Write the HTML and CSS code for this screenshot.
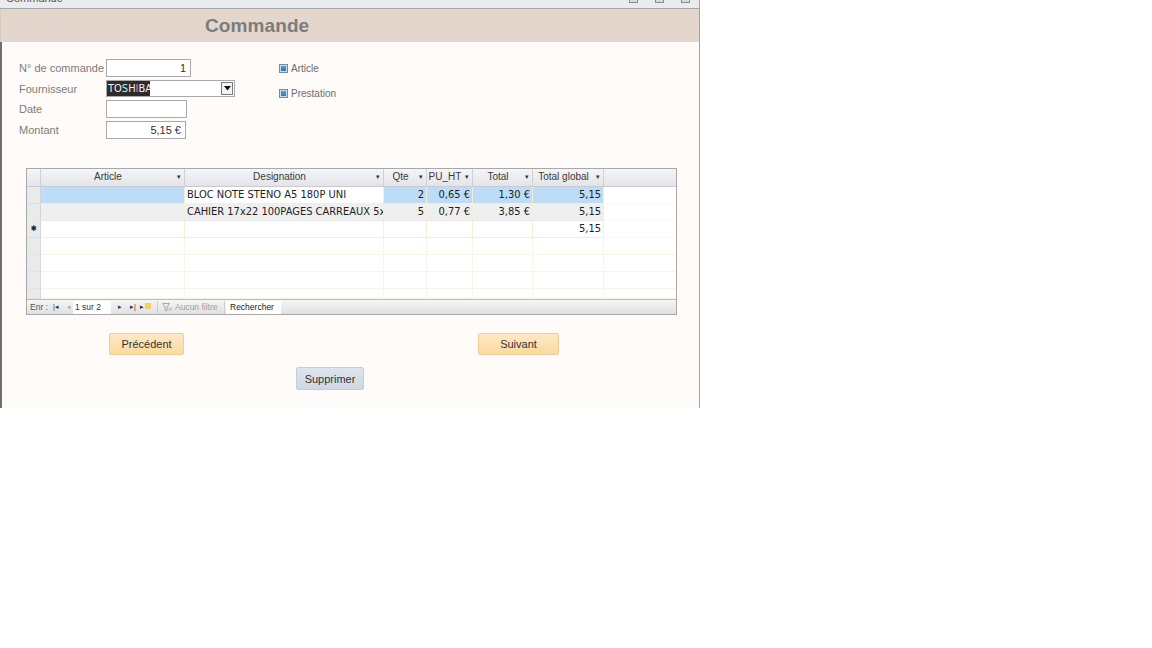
FILE: index.html
```html
<!DOCTYPE html>
<html lang="fr">
<head>
<meta charset="utf-8">
<title>Commande</title>
<link rel="stylesheet" href="styles.css">
</head>
<body>
<div class="window">
  <div class="titlebar">
    <span class="tb-text">Commande</span>
    <span class="tb-btns"><i></i><i></i><i></i></span>
  </div>
  <div class="header"><h1 class="title">Commande</h1></div>
  <div class="content">
    <div class="top">
      <div class="fields">
        <label class="lbl">N° de commande</label>
        <div class="input w84 num">1</div>
        <label class="lbl">Fournisseur</label>
        <div class="combo"><span class="sel">TO<span class="c1">S</span>H<span class="c2">I</span>BA</span><span class="drop"><svg width="7" height="5" viewBox="0 0 7 5"><path d="M0 0h7L3.5 4.5z" fill="#111"/></svg></span></div>
        <label class="lbl">Date</label>
        <div class="input w81"></div>
        <label class="lbl">Montant</label>
        <div class="input w80 num">5,15 €</div>
      </div>
      <div class="checks">
        <div class="chk"><span class="box"></span>Article</div>
        <div class="chk"><span class="box"></span>Prestation</div>
      </div>
    </div>

    <div class="sheet">
      <div class="grid head">
        <div class="c sel-col"></div>
        <div class="c h">Article<span class="arr">▾</span></div>
        <div class="c h">Designation<span class="arr">▾</span></div>
        <div class="c h">Qte<span class="arr">▾</span></div>
        <div class="c h">PU_HT<span class="arr">▾</span></div>
        <div class="c h">Total<span class="arr">▾</span></div>
        <div class="c h">Total global<span class="arr">▾</span></div>
        <div class="c hx"></div>
      </div>
      <div class="grid row r1">
        <div class="c sel-col"></div>
        <div class="c blue"></div>
        <div class="c wh">BLOC NOTE STENO A5 180P UNI</div>
        <div class="c blue r">2</div>
        <div class="c blue r">0,65 €</div>
        <div class="c blue r">1,30 €</div>
        <div class="c blue r">5,15</div>
        <div class="c ex"></div>
      </div>
      <div class="grid row r2">
        <div class="c sel-col"></div>
        <div class="c"></div>
        <div class="c">CAHIER 17x22 100PAGES CARREAUX 5x</div>
        <div class="c r">5</div>
        <div class="c r">0,77 €</div>
        <div class="c r">3,85 €</div>
        <div class="c r">5,15</div>
        <div class="c ex"></div>
      </div>
      <div class="grid row r3">
        <div class="c sel-col star">✱</div>
        <div class="c"></div>
        <div class="c"></div>
        <div class="c"></div>
        <div class="c"></div>
        <div class="c"></div>
        <div class="c r">5,15</div>
        <div class="c ex"></div>
      </div>
      <div class="grid row empty"><div class="c sel-col"></div><div class="c"></div><div class="c"></div><div class="c"></div><div class="c"></div><div class="c"></div><div class="c"></div><div class="c ex"></div></div>
      <div class="grid row empty"><div class="c sel-col"></div><div class="c"></div><div class="c"></div><div class="c"></div><div class="c"></div><div class="c"></div><div class="c"></div><div class="c ex"></div></div>
      <div class="grid row empty"><div class="c sel-col"></div><div class="c"></div><div class="c"></div><div class="c"></div><div class="c"></div><div class="c"></div><div class="c"></div><div class="c ex"></div></div>
      <div class="grid row empty last"><div class="c sel-col"></div><div class="c"></div><div class="c"></div><div class="c"></div><div class="c"></div><div class="c"></div><div class="c"></div><div class="c ex"></div></div>
      <div class="nav">
        <span class="nt">Enr :</span>
        <span class="ni n1">|◂</span>
        <span class="ni n2">◂</span>
        <span class="pos">1 sur 2</span>
        <span class="ni n3">▸</span>
        <span class="ni n4">▸|</span>
        <span class="ni n5">▸<span class="newstar"></span></span>
        <span class="filt"><svg width="11" height="9" viewBox="0 0 11 9"><path d="M0.5 0.5h7L5 4v4L3 7V4z" fill="none" stroke="#a0a0a0" stroke-width="0.9"/><path d="M6.5 4.5l3.5 3.5M10 4.5L6.5 8" stroke="#b0b0b0" stroke-width="0.9"/></svg>Aucun filtre</span>
        <span class="search">Rechercher</span>
      </div>
    </div>

    <div class="btnrow">
      <button class="btn orange prev">Précédent</button>
      <button class="btn orange next">Suivant</button>
    </div>
    <div class="btnrow2">
      <button class="btn grey">Supprimer</button>
    </div>
  </div>
</div>
</body>
</html>
```
FILE: styles.css
```css
* { box-sizing: border-box; }
html, body { margin: 0; padding: 0; background: #ffffff; }
body { font-family: "Liberation Sans", Arial, sans-serif; }

.window {
  width: 700px;
  height: 408px;
  display: flex;
  flex-direction: column;
  border-right: 1px solid #a3a3a3;
}

.titlebar {
  height: 9px;
  background: #eaebee;
  border-bottom: 1px solid #a5a6a8;
  display: flex;
  justify-content: space-between;
  overflow: hidden;
}
.tb-text {
  font-size: 11px;
  line-height: 11px;
  margin-top: -7px;
  margin-left: 6px;
  color: #555;
}
.tb-btns { display: flex; gap: 17px; margin-right: 9px; margin-top: -6px; }
.tb-btns i {
  display: block;
  width: 9px;
  height: 9px;
  border: 1px solid #8c8c8c;
  background: #d9dadd;
}

.header {
  height: 33px;
  background: #e3d6cd;
  border-left: 1px solid #d8cbc3;
  display: flex;
  align-items: center;
}
.title {
  margin: 0 0 0 204px;
  font-size: 19px;
  font-weight: bold;
  color: #7c7c7c;
  line-height: 22px;
  letter-spacing: 0.1px;
}

.content {
  flex: 1;
  background: #fffbf8;
  border-left: 2px solid #6f6f6f;
  padding: 17px 0 0 0;
}

.top { display: flex; }
.fields {
  display: grid;
  grid-template-columns: 87px auto;
  grid-template-rows: 18px 17px 18px 18px;
  row-gap: 3px;
  padding-left: 17px;
  width: 277px;
  align-items: center;
  justify-items: start;
}
.lbl {
  font-size: 11px;
  color: #7b7b7b;
  white-space: nowrap;
}
.input {
  height: 18px;
  background: #fff;
  border: 1px solid #a9a9a9;
  font-size: 11px;
  color: #333;
  line-height: 16px;
  padding: 0 4px;
}
.num { text-align: right; }
.w84 { width: 85px; }
.w81 { width: 81px; }
.w80 { width: 80px; }

.combo {
  width: 129px;
  height: 17px;
  background: #fff;
  border: 1px solid #a9a9a9;
  display: flex;
  justify-content: space-between;
  align-items: stretch;
}
.sel {
  background: #2c2c2c;
  color: #f2f2f2;
  font-family: "Liberation Sans Narrow", "DejaVu Sans Condensed", sans-serif;
  font-size: 11px;
  line-height: 15px;
  padding: 0 1px;
  width: 43px;
}
.c1 { color: #b6f0ff; }
.c2 { color: #ff7ad8; }
.drop {
  width: 12px;
  margin: 1px;
  border: 1px solid #7a7a7a;
  background: #f4f4f4;
  display: flex;
  align-items: center;
  justify-content: center;
}

.checks {
  display: flex;
  flex-direction: column;
  gap: 12px;
  padding-top: 3px;
}
.chk {
  display: flex;
  align-items: center;
  gap: 3px;
  font-size: 10px;
  color: #6c6c6c;
  height: 13px;
}
.box {
  width: 9px;
  height: 9px;
  border: 1px solid #7b8a99;
  background: linear-gradient(#5aa5dc, #2c6fae);
  box-shadow: inset 0 0 0 1px #c8dcec;
}

.sheet {
  margin: 29px 0 0 24px;
  width: 651px;
  height: 147px;
  border: 1px solid #a8a8a8;
  background: #fff;
  display: flex;
  flex-direction: column;
}
.grid {
  display: grid;
  grid-template-columns: 14px 144px 199px 43px 46px 60px 71px 1fr;
  height: 17px;
  font-family: "Liberation Sans Narrow", "DejaVu Sans Condensed", sans-serif;
  font-size: 11px;
}
.head {
  background: linear-gradient(#f4f5f7, #e2e4e8);
  border-bottom: 1px solid #c9cbd0;
  height: 18px;
}
.c {
  border-right: 1px solid #f3efd9;
  border-bottom: 1px solid #f3efd9;
  line-height: 16px;
  padding: 0 2px;
  white-space: nowrap;
  overflow: hidden;
  color: #1e1e1e;
}
.head .c { border-right: 1px solid #cfd1d5; border-bottom: none; }
.h {
  position: relative;
  text-align: center;
  color: #3a3a3a;
  font-family: "Liberation Sans", Arial, sans-serif;
  font-size: 10px;
  padding: 0 10px 0 1px;
}
.arr {
  position: absolute;
  right: 3px;
  top: 0;
  font-size: 7px;
  color: #333;
}
.head .hx { border-right: none; }
.sel-col {
  background: #e9eaec;
  border-right: 1px solid #d3d3d3;
  border-bottom: 1px solid #dcdcdc;
  padding: 0;
}
.head .sel-col { background: transparent; }
.r { text-align: right; }
.blue { background: #bcdcf7; }
.wh { background: #fff; }
.r2 .c { background: #efeff0; border-bottom-color: #e9e9e9; }
.r2 .sel-col { background: #e9eaec; }
.row .ex { background: #fff; border-right: none; border-bottom-color: #fbfaf3; }
.star {
  font-size: 8px;
  text-align: center;
  line-height: 16px;
  color: #222;
}
.empty .c { border-color: #f8f5e6; }
.empty .sel-col { border-right-color: #d9d9d9; border-bottom-color: #e3e3e3; }
.last { flex: 1; }

.nav {
  height: 15px;
  background: linear-gradient(#f6f6f7, #dfe0e3);
  border-top: 1px solid #b9bbbf;
  display: flex;
  align-items: center;
  font-size: 8.5px;
  color: #333;
  padding-left: 3px;
  white-space: nowrap;
}
.nt { width: 23px; color: #555; }
.ni { font-size: 7px; color: #333; }
.n1 { width: 14px; }
.n2 { width: 6px; color: #aaa; }
.pos {
  background: #fff;
  height: 13px;
  line-height: 13px;
  width: 38px;
  padding-left: 2px;
  margin-right: 7px;
}
.n3 { width: 12px; }
.n4 { width: 10px; }
.n5 { width: 17px; }
.newstar {
  display: inline-block;
  width: 6px;
  height: 6px;
  background: #f7d257;
  margin-left: 1px;
}
.filt {
  display: flex;
  align-items: center;
  gap: 2px;
  color: #a0a0a0;
  padding: 0 4px 0 4px;
  border-left: 1px solid #cfcfcf;
  border-right: 1px solid #cfcfcf;
  height: 13px;
  width: 68px;
}
.search {
  background: #fff;
  height: 13px;
  line-height: 13px;
  width: 55px;
  padding-left: 4px;
  margin-left: 1px;
  color: #222;
}

.btnrow {
  display: flex;
  padding-left: 107px;
  gap: 294px;
  margin-top: 18px;
}
.btnrow2 {
  display: flex;
  padding-left: 294px;
  margin-top: 12px;
}
.btn {
  font-family: "Liberation Sans", Arial, sans-serif;
  font-size: 11px;
  color: #333;
  height: 22px;
  padding: 0;
  border-radius: 2px;
  cursor: pointer;
}
.orange {
  background: linear-gradient(#fde9c6, #fbd9a0);
  border: 1px solid #f1cc94;
}
.prev { width: 75px; }
.next { width: 81px; }
.grey {
  width: 68px;
  height: 23px;
  background: linear-gradient(#dde4ec, #cfd8e2);
  border: 1px solid #c3cdd8;
}
```
